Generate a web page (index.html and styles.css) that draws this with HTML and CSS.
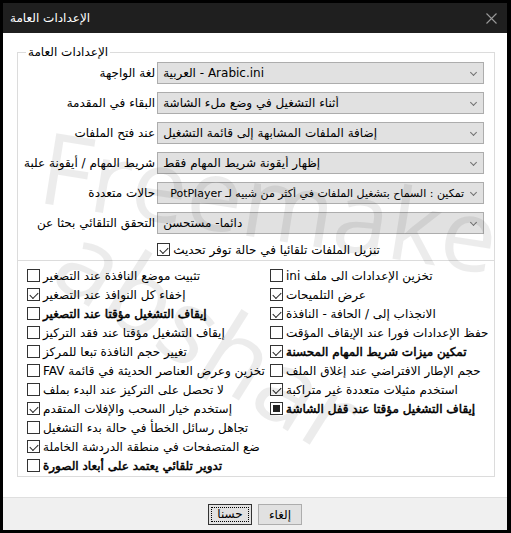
FILE: index.html
```html
<!DOCTYPE html>
<html lang="ar">
<head>
  <meta charset="UTF-8" />
  <title>الإعدادات العامة</title>
  <link rel="stylesheet" href="styles.css">
</head>
<body>
  <div class="window">
    <div class="titlebar">
      <span class="title">الإعدادات العامة</span>
      <svg class="close" width="11" height="11" viewBox="0 0 11 11"><path d="M0.5 0.5 L10.5 10.5 M10.5 0.5 L0.5 10.5" stroke="#9a9a9a" stroke-width="1.1" fill="none"/></svg>
    </div>

    <div class="content">
      <fieldset class="group">
        <legend>الإعدادات العامة</legend>
        <div class="form">
          <span class="field-label">لغة الواجهة</span>
          <div class="combo combo-ltr"><span class="combo-text">العربية - Arabic.ini</span><span class="arrow"></span></div>

          <span class="field-label">البقاء في المقدمة</span>
          <div class="combo"><span class="combo-text">أثناء التشغيل في وضع ملء الشاشة</span><span class="arrow"></span></div>

          <span class="field-label">عند فتح الملفات</span>
          <div class="combo"><span class="combo-text">إضافة الملفات المشابهة إلى قائمة التشغيل</span><span class="arrow"></span></div>

          <span class="field-label">شريط المهام / أيقونة علبة</span>
          <div class="combo"><span class="combo-text">إظهار أيقونة شريط المهام فقط</span><span class="arrow"></span></div>

          <span class="field-label">حالات متعددة</span>
          <div class="combo combo-long"><span class="combo-text">تمكين : السماح بتشغيل الملفات في أكثر من شبيه لـ PotPlayer</span><span class="arrow"></span></div>

          <span class="field-label">التحقق التلقائي بحثا عن</span>
          <div class="combo"><span class="combo-text">دائما- مستحسن</span><span class="arrow"></span></div>

          <div class="check check-update"><span class="cb on"></span><span class="check-text">تنزيل الملفات تلقائيا في حالة توفر تحديث</span></div>
        </div>
      </fieldset>

      <div class="options">
        <div class="col col-left">
          <div class="check"><span class="cb"></span><span class="check-text">تثبيت موضع النافذة عند التصغير</span></div>
          <div class="check"><span class="cb on"></span><span class="check-text">إخفاء كل النوافذ عند التصغير</span></div>
          <div class="check"><span class="cb"></span><span class="check-text bold">إيقاف التشغيل مؤقتا عند التصغير</span></div>
          <div class="check"><span class="cb"></span><span class="check-text">إيقاف التشغيل مؤقتا عند فقد التركيز</span></div>
          <div class="check"><span class="cb"></span><span class="check-text">تغيير حجم النافذة تبعا للمركز</span></div>
          <div class="check"><span class="cb"></span><span class="check-text">تخزين وعرض العناصر الحديثة في قائمة FAV</span></div>
          <div class="check"><span class="cb"></span><span class="check-text">لا تحصل على التركيز عند البدء بملف</span></div>
          <div class="check"><span class="cb on"></span><span class="check-text">إستخدم خيار السحب والإفلات المتقدم</span></div>
          <div class="check"><span class="cb"></span><span class="check-text">تجاهل رسائل الخطأ في حالة بدء التشغيل</span></div>
          <div class="check"><span class="cb on"></span><span class="check-text">ضع المتصفحات في منطقة الدردشة الخاملة</span></div>
          <div class="check"><span class="cb"></span><span class="check-text bold">تدوير تلقائي يعتمد على أبعاد الصورة</span></div>
        </div>
        <div class="col">
          <div class="check"><span class="cb"></span><span class="check-text">تخزين الإعدادات الى ملف ini</span></div>
          <div class="check"><span class="cb on"></span><span class="check-text">عرض التلميحات</span></div>
          <div class="check"><span class="cb on"></span><span class="check-text">الانجذاب إلى / الحافة - النافذة</span></div>
          <div class="check"><span class="cb"></span><span class="check-text">حفظ الإعدادات فورا عند الإيقاف المؤقت</span></div>
          <div class="check"><span class="cb on"></span><span class="check-text bold">تمكين ميزات شريط المهام المحسنة</span></div>
          <div class="check"><span class="cb"></span><span class="check-text">حجم الإطار الافتراضي عند إغلاق الملف</span></div>
          <div class="check"><span class="cb on"></span><span class="check-text">استخدم مثيلات متعددة غير متراكبة</span></div>
          <div class="check"><span class="cb mixed"></span><span class="check-text bold">إيقاف التشغيل مؤقتا عند قفل الشاشة</span></div>
        </div>
      </div>

      <span class="watermark wm-one">Freemake</span>
      <span class="watermark wm-two">abshar</span>
    </div>

    <div class="footer">
      <button class="btn btn-default"><span class="focus">حسنا</span></button>
      <button class="btn">إلغاء</button>
    </div>
  </div>
</body>
</html>
```

FILE: styles.css
```css
:root {
  --border-light: #dcdcdc;
  --ctrl-bg: #e1e1e1;
  --ctrl-border: #adadad;
  --text: #000;
}

* {
  box-sizing: border-box;
}

body {
  margin: 0;
  background: #000;
  font-family: "DejaVu Sans", "Noto Sans", sans-serif;
  font-size: 12px;
  color: var(--text);
}

.window {
  margin: 3px;
  width: 504px;
  height: 527px;
  display: flex;
  flex-direction: column;
  background: #fff;
}

.titlebar {
  height: 30px;
  background: #1f1f1f;
  color: #fff;
  display: flex;
  align-items: center;
  justify-content: space-between;
  padding: 0 10px 0 7px;
}

.title {
  font-size: 12px;
  direction: rtl;
}

.content {
  position: relative;
  flex: 1;
  padding: 12px 12px 0 14px;
  overflow: hidden;
}

.group {
  margin: 0;
  padding: 2px 10px 3px 6px;
  border: 1px solid var(--border-light);
}

.group legend {
  padding: 0 2px;
  margin-left: 2px;
  line-height: 15px;
  direction: rtl;
}

.form {
  display: grid;
  grid-template-columns: 1fr 327px;
  column-gap: 2px;
  row-gap: 8px;
  align-items: center;
}

.field-label {
  justify-self: end;
  direction: rtl;
  white-space: nowrap;
}

.combo {
  height: 22px;
  background: var(--ctrl-bg);
  border: 1px solid var(--ctrl-border);
  display: flex;
  align-items: center;
  padding: 0 7px 0 5px;
  overflow: hidden;
}

.combo-text {
  flex: 1;
  white-space: nowrap;
  overflow: hidden;
  direction: rtl;
  text-align: left;
}

.combo-ltr .combo-text {
  direction: ltr;
}

.combo-long .combo-text {
  font-size: 11px;
  text-align: right;
  padding-right: 7px;
}

.arrow {
  width: 5px;
  height: 5px;
  border-right: 1px solid #707070;
  border-bottom: 1px solid #707070;
  transform: translateY(-1px) rotate(45deg);
  flex: none;
}

.check {
  height: 19px;
  display: flex;
  align-items: center;
  gap: 3px;
  white-space: nowrap;
}

.check-update {
  grid-column: 2;
  height: 15px;
}

.check-text {
  direction: rtl;
}

/* DejaVu bold runs far wider than the Windows UI font, so thicken the regular cut */
.bold {
  -webkit-text-stroke: 0.5px currentColor;
}

.cb {
  position: relative;
  width: 13px;
  height: 13px;
  border: 1px solid #333;
  background: #fff;
  flex: none;
}

.cb.on::after {
  content: "";
  position: absolute;
  left: 2px;
  top: 1px;
  width: 7px;
  height: 4px;
  border-left: 1px solid #222;
  border-bottom: 1px solid #222;
  transform: translate(0, 2px) rotate(-45deg);
}

.cb.mixed::after {
  content: "";
  position: absolute;
  left: 2px;
  top: 2px;
  width: 7px;
  height: 7px;
  background: #222;
}

.options {
  height: 216px;
  border: 1px solid var(--border-light);
  border-top: none;
  padding: 5px 0 0 9px;
  display: flex;
}

.col-left {
  width: 243px;
}

.watermark {
  position: absolute;
  font-family: "Open Sans", sans-serif;
  font-size: 100px;
  color: rgba(0, 0, 0, 0.075);
  pointer-events: none;
  transform-origin: left bottom;
  white-space: nowrap;
}

.wm-one {
  left: 28px;
  top: 62px;
  transform: rotate(9deg);
}

.wm-two {
  left: 28px;
  top: 132px;
  font-size: 104px;
  transform: rotate(32deg);
}

.footer {
  height: 33px;
  background: #f0f0f0;
  border-top: 1px solid #dfdfdf;
  display: flex;
  justify-content: center;
  align-items: flex-start;
  gap: 6px;
  padding-top: 6px;
}

.btn {
  width: 44px;
  height: 21px;
  padding: 0;
  background: var(--ctrl-bg);
  border: 1px solid var(--ctrl-border);
  font-family: inherit;
  font-size: 12px;
  color: #000;
}

.btn-default {
  border-color: #333;
  padding: 2px;
}

.focus {
  display: block;
  height: 100%;
  border: 1px dotted #000;
  line-height: 13px;
}
```
